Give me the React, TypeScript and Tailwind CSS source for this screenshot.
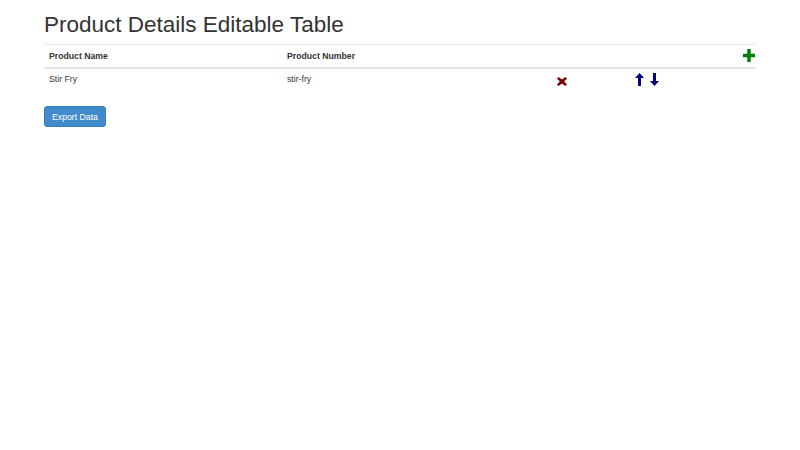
const font = { fontFamily: '"Liberation Sans", Arial, Helvetica, sans-serif' };

function RemoveIcon() {
  return (
    <svg width="10" height="9" viewBox="0 0 10 9" className="inline-block">
      <path d="M1.6 0 L5 2.6 L8.4 0 L10 1.6 L7.2 4.5 L10 7.4 L8.4 9 L5 6.4 L1.6 9 L0 7.4 L2.8 4.5 L0 1.6 Z" fill="#800000" />
    </svg>
  );
}

function ArrowUp() {
  return (
    <svg width="9" height="13" viewBox="0 0 9 13" className="inline-block">
      <path d="M4.5 0 L9 5 L6 5 L6 13 L3 13 L3 5 L0 5 Z" fill="#000080" />
    </svg>
  );
}

function ArrowDown() {
  return (
    <svg width="9" height="13" viewBox="0 0 9 13" className="inline-block">
      <path d="M4.5 13 L9 8 L6 8 L6 0 L3 0 L3 8 L0 8 Z" fill="#000080" />
    </svg>
  );
}

function PlusIcon() {
  return (
    <svg width="12" height="13" viewBox="0 0 12 13" className="inline-block">
      <path d="M4.3 0 H7.7 V4.8 H12 V8.2 H7.7 V13 H4.3 V8.2 H0 V4.8 H4.3 Z" fill="#008000" />
    </svg>
  );
}

export default function App() {
  const rows = [{ name: "Stir Fry", number: "stir-fry" }];

  return (
    <div className="min-h-[450px] bg-white text-[#333]" style={font}>
      <div className="px-[44px] pt-[13px]">
        <h1 className="text-[22.5px] leading-[24px] font-normal mb-[7px]">Product Details Editable Table</h1>
        <table className="w-[712px] table-fixed border-collapse text-[8.7px] leading-[12px]">
          <colgroup>
            <col className="w-[238px]" />
            <col className="w-[270px]" />
            <col className="w-[78px]" />
            <col className="w-[90px]" />
            <col />
          </colgroup>
          <thead>
            <tr className="border-t border-[#e5e5e5]">
              <th className="text-left font-bold px-[5px] py-[5px] border-b-2 border-[#e3e3e3]">Product Name</th>
              <th className="text-left font-bold px-[5px] py-[5px] border-b-2 border-[#e3e3e3]">Product Number</th>
              <th className="border-b-2 border-[#e3e3e3]"></th>
              <th className="border-b-2 border-[#e3e3e3]"></th>
              <th className="text-right pr-[1px] border-b-2 border-[#e3e3e3] align-middle">
                <span className="inline-flex pt-[2px]">
                  <PlusIcon />
                </span>
              </th>
            </tr>
          </thead>
          <tbody>
            {rows.map((r) => (
              <tr key={r.number}>
                <td className="px-[5px] pt-[4px] pb-[7px] align-top">{r.name}</td>
                <td className="px-[5px] pt-[4px] pb-[7px] align-top">{r.number}</td>
                <td className="px-[5px] pt-[6px] pb-[7px] align-top">
                  <RemoveIcon />
                </td>
                <td className="px-[5px] pt-[4px] pb-[7px] align-top">
                  <span className="inline-flex gap-[6px]">
                    <ArrowUp />
                    <ArrowDown />
                  </span>
                </td>
                <td></td>
              </tr>
            ))}
          </tbody>
        </table>
        <button className="mt-[10px] h-[21px] w-[62px] bg-[#428bca] border border-[#357ebd] rounded-[3px] text-white text-[8.7px] leading-[12px]">
          Export Data
        </button>
      </div>
    </div>
  );
}
